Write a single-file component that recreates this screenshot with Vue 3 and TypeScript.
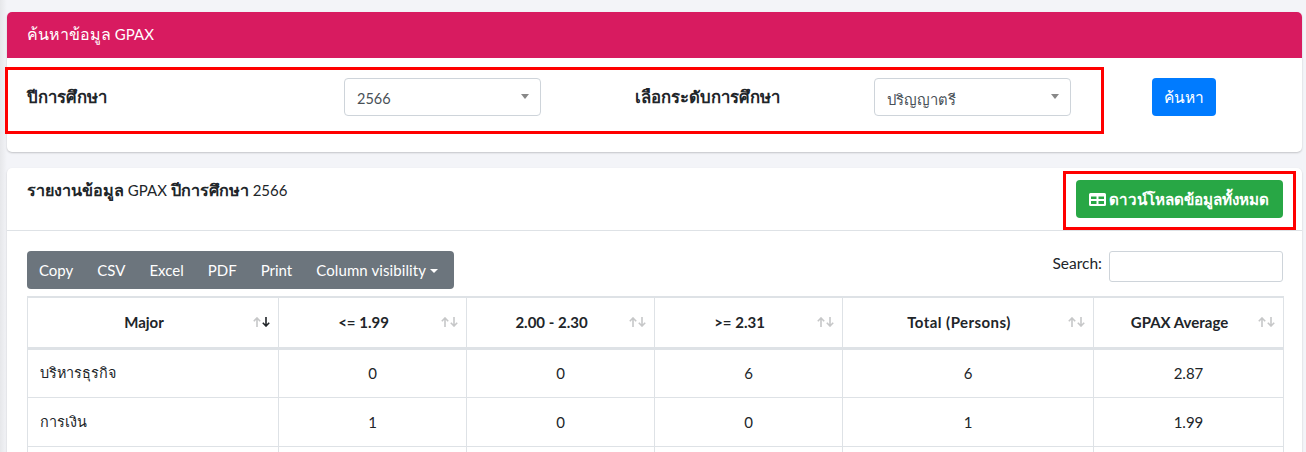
<script setup lang="ts">
const tools: string[] = ['Copy', 'CSV', 'Excel', 'PDF', 'Print']
const heads: string[] = ['Major', '<= 1.99', '2.00 - 2.30', '>= 2.31', 'Total (Persons)', 'GPAX Average']
const rows: string[][] = [
  ['บริหารธุรกิจ', '0', '0', '6', '6', '2.87'],
  ['การเงิน', '1', '0', '0', '1', '1.99'],
  ['', '', '', '', '', ''],
]
</script>

<template>
  <main class="page">
    <section class="card search-card">
      <header class="pink"><span class="th">ค้นหาข้อมูล</span> GPAX</header>
      <div class="filters">
        <strong class="label">ปีการศึกษา</strong>
        <div class="select">2566<i class="caret"></i></div>
        <strong class="label second">เลือกระดับการศึกษา</strong>
        <div class="select"><span class="th-sel">ปริญญาตรี</span><i class="caret"></i></div>
        <button class="btn-search">ค้นหา</button>
      </div>
      <div class="mark mark-a"></div>
    </section>

    <section class="card report-card">
      <header class="report-head">
        <div class="report-title"><b>รายงานข้อมูล</b> GPAX <b>ปีการศึกษา</b> 2566</div>
        <button class="btn-green">
          <svg width="17" height="13" viewBox="0 0 17 13"><path fill="#fff" fill-rule="evenodd" d="M1.500 0h14A1.500 1.500 0 0 1 17 1.500v10a1.500 1.500 0 0 1-1.500 1.500h-14A1.500 1.500 0 0 1 0 11.500v-10A1.500 1.500 0 0 1 1.500 0zM2 3.500V6h5.500V3.500zm7.500 0V6H15V3.500zM2 8v3h5.500V8zm7.500 0v3H15V8z"/></svg>
          <span>ดาวน์โหลดข้อมูลทั้งหมด</span>
        </button>
        <div class="mark mark-b"></div>
      </header>
      <div class="report-body">
        <div class="toolbar">
          <div class="tools">
            <span v-for="t in tools" :key="t" class="tool">{{ t }}</span>
            <span class="tool tool-last">Column visibility<i class="drop"></i></span>
          </div>
          <label class="search">Search: <span class="search-input"></span></label>
        </div>
        <table class="grid">
          <colgroup>
            <col class="c1" /><col class="c2" /><col class="c2" /><col class="c2" /><col class="c1" /><col class="c3" />
          </colgroup>
          <thead>
            <tr>
              <th v-for="(h, i) in heads" :key="h">
                {{ h }}
                <span class="sort">
                  <svg class="off" width="8" height="10" viewBox="0 0 8 10"><path d="M4 10V1M.8 4.200 4 1l3.200 3.200" fill="none" stroke="#212529" stroke-width="1.600"/></svg>
                  <svg :class="{ off: i !== 0 }" width="8" height="10" viewBox="0 0 8 10"><path d="M4 0v9M.8 5.800 4 9l3.200-3.200" fill="none" stroke="#212529" stroke-width="1.600"/></svg>
                </span>
              </th>
            </tr>
          </thead>
          <tbody>
            <tr v-for="(r, ri) in rows" :key="ri">
              <td v-for="(c, ci) in r" :key="ci" :class="{ thc: ci === 0 }">{{ c }}</td>
            </tr>
          </tbody>
        </table>
      </div>
    </section>
  </main>
</template>

<style>
html, body { margin: 0; height: 452px; overflow: hidden; background: #f3f4f8; }
</style>

<style scoped>
.page {
  box-sizing: border-box; width: 1306px; height: 452px; overflow: hidden;
  padding: 12px 4px 0 7px; color: #212529;
  background: linear-gradient(90deg, #e6e7ea, #f3f4f8 7px);
  font: 16px/24px Lato, "Noto Sans", sans-serif;
}
.th { font-size: 16px; }
.th-sel { font-size: 14.800px; }
.card {
  position: relative; background: #fff; border-radius: 5px;
  box-shadow: 0 1px 2px rgba(0, 0, 0, .2);
}
.search-card { height: 140px; }
.report-card { margin-top: 16px; height: 300px; }
.pink {
  height: 46px; box-sizing: border-box; padding: 10px 20px; background: #d81b60; color: #fff;
  border-radius: 5px 5px 0 0; font-size: 15px;
}
.filters {
  display: grid; grid-template-columns: 317px 197px 94px 239px 197px 81px 64px;
  padding: 20px 0 0 20px; align-items: center; height: 38px;
}
.label { font-weight: 700; font-size: 16.700px; white-space: nowrap; }
.second { grid-column: 4; }
.select {
  position: relative; box-sizing: border-box; height: 38px; padding: 8px 12px 6px;
  border: 1px solid #ced4da; border-radius: 4px; color: #495057; font-size: 14.500px;
  white-space: nowrap;
}
.caret {
  position: absolute; right: 11px; top: 15px; border: 4.500px solid transparent;
  border-top: 5px solid #888; border-bottom: 0;
}
.btn-search {
  grid-column: 7; height: 38px; border: 0; border-radius: 4px; padding: 0;
  background: #007bff; color: #fff; font-family: inherit; font-size: 15.500px;
}
.mark { position: absolute; border: 3px solid #f00; box-sizing: border-box; pointer-events: none; }
.mark-a { left: -2px; top: 55px; width: 1099px; height: 67px; }
.mark-b { left: 1056px; top: 3px; width: 233px; height: 59px; }
.report-head {
  position: relative; height: 63px; box-sizing: border-box; border-bottom: 1px solid #dee2e6;
  display: flex; justify-content: space-between; align-items: flex-start;
  padding: 10px 19px 0 20px;
}
.report-title { font-size: 15px; }
.report-title b { font-weight: 700; font-size: 16.200px; }
.btn-green {
  width: 207px; height: 38px; margin-top: 2px; border: 0; border-radius: 4px; background: #28a745;
  color: #fff; font: 700 15.200px/24px Lato, "Noto Sans", sans-serif;
  display: flex; align-items: center; justify-content: flex-start; gap: 3px; padding: 0 0 0 13px;
}
.report-body { padding: 20px 19px 0 20px; }
.toolbar { display: flex; justify-content: space-between; align-items: flex-start; height: 45px; }
.tools {
  display: flex; height: 38px; width: 427px; background: #6c757d; border-radius: 4px; color: #fff;
  font-size: 15px; align-items: center;
}
.tool { padding: 0 12px; white-space: nowrap; }
.tool-last { letter-spacing: .1px; }
.drop {
  display: inline-block; margin-left: 4px; vertical-align: 3px; border: 4px solid transparent;
  border-top-color: #fff; border-bottom: 0;
}
.search { display: flex; gap: 7px; font-size: 15.500px; }
.search-input {
  width: 174px; height: 31px; box-sizing: border-box; border: 1px solid #ced4da; border-radius: 3px;
}
.grid {
  table-layout: fixed; width: 1256px; border-collapse: collapse; font-size: 15px;
}
.c1 { width: 251px; } .c2 { width: 188px; } .c3 { width: 190px; }
th, td { border: 1px solid #dee2e6; text-align: center; padding: 0 12px; }
th {
  position: relative; height: 51px; box-sizing: border-box; font-weight: 700;
  border-top-width: 2px; border-bottom-width: 3px; padding-right: 30px;
}
th:nth-child(5) { letter-spacing: .45px; }
td { height: 49px; box-sizing: border-box; }
td.thc { text-align: left; font-size: 14.400px; }
.sort { position: absolute; right: 8px; top: 19px; display: flex; gap: 1px; }
.off { opacity: .25; }
</style>
